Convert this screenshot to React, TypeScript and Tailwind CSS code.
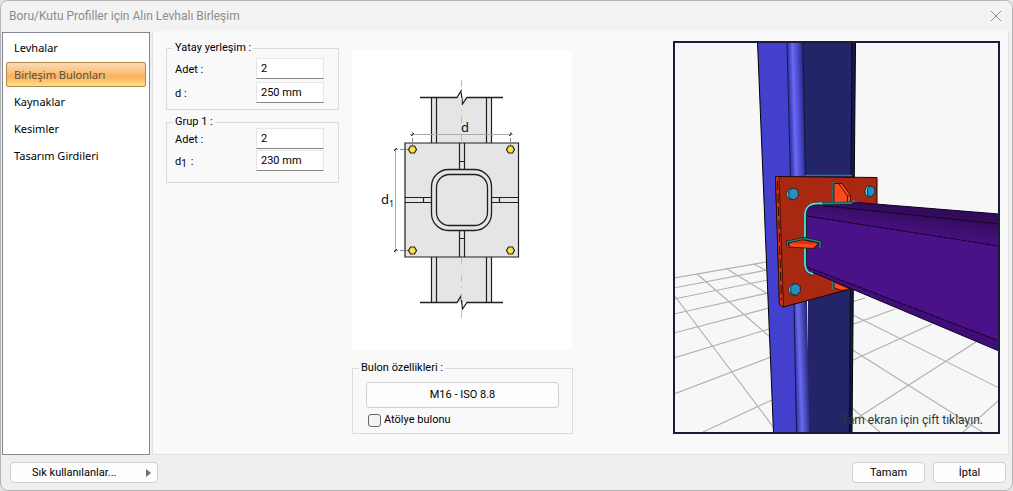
import { useState } from 'react'
import type { ReactNode } from 'react'
import { clsx } from 'clsx'

const pages = ['Levhalar', 'Birleşim Bulonları', 'Kaynaklar', 'Kesimler', 'Tasarım Girdileri']

const buttonStyle = 'rounded border border-[#d0d0d0] bg-[#fdfdfd] hover:bg-gray-100'

const Group = ({ title, className, children }: { title: string; className?: string; children: ReactNode }) => {
  return (
    <fieldset className="min-w-0 border border-[#dcdcdc]">
      <legend className="ml-1.5 px-0.5 leading-3">{title}</legend>
      <div className={className}>{children}</div>
    </fieldset>
  )
}

const Field = ({ id, label, value }: { id: string; label: ReactNode; value: string }) => {
  return (
    <div className="flex h-[21px] items-center justify-between pl-2 pr-3.5">
      <label htmlFor={id} className="pt-0.5">
        {label}
      </label>
      <input
        id={id}
        defaultValue={value}
        className="h-[21px] w-[68px] border border-[#e6e6e6] border-b-[#868686] bg-white px-1 outline-none"
      />
    </div>
  )
}

const Hexagon = ({ x, y }: { x: number; y: number }) => (
  <path transform={`translate(${x} ${y})`} d="M-4 0L-2-3.5H2L4 0L2 3.5H-2Z" fill="#ffe13c" stroke="#222" strokeWidth="1.2" />
)

// Front view of the end plate with bolt spacing dimensions
const PlateDiagram = () => {
  return (
    <svg viewBox="0 0 220 300" className="h-[300px] w-[220px] bg-white" fill="none" stroke="#1f1f1f">
      <path d="M79.5 47.5H139.5V252.5H79.5Z" fill="#e5e5e5" stroke="none" />
      <path d="M79.5 47.5V252.5M84.5 47.5V252.5M134.5 47.5V252.5M139.5 47.5V252.5" strokeWidth="1.2" />
      <path d="M68 47.5H105L109 41L110.5 54L115 47.5H151M68 252.5H105L109 246L110.5 259L115 252.5H151" strokeWidth="1.3" />
      <path d="M109.5 30V93M109.5 207V270" stroke="#bbb" strokeDasharray="7 5 1 5" />
      <path d="M53 93H166.5V207H53Z" fill="#e5e5e5" strokeWidth="1.2" />
      <path
        d="M107.5 93V119.5M112.5 93V119.5M107.5 111.5H112.5M107.5 180.5V207M112.5 180.5V207M107.5 188.5H112.5M53 147.5H79.5M53 152.5H79.5M71.5 147.5V152.5M139.5 147.5H166.5M139.5 152.5H166.5M147.5 147.5V152.5"
        strokeWidth="1.2"
      />
      <rect x="79.5" y="119.5" width="60" height="61" rx="17" fill="#e5e5e5" strokeWidth="1.3" />
      <rect x="84.5" y="124.5" width="51" height="51" rx="13" fill="#e5e5e5" strokeWidth="1.3" />
      <path d="M58 84.5H161M43.5 98V203" stroke="#aaa" />
      <path d="M60.5 82V96M158.5 82V96M42 99.5H57M42 200.5H57" stroke="#888" strokeDasharray="4 2" />
      <path d="M59 86L62 83M157 86L160 83M42 101L45 98M42 202L45 199" stroke="#333" />
      <Hexagon x={60.5} y={99.5} />
      <Hexagon x={158.5} y={99.5} />
      <Hexagon x={60.5} y={200.5} />
      <Hexagon x={158.5} y={200.5} />
      <g className="font-['Noto_Sans',sans-serif]" fill="#111" stroke="none" fontSize="13">
        <text x="109" y="82">d</text>
        <text x="29" y="154">d</text>
        <text x="37" y="157" fontSize="9">1</text>
      </g>
    </svg>
  )
}

const Bolt = ({ x, y, rx }: { x: number; y: number; rx: number }) => (
  <g stroke="#101820" strokeWidth="0.8">
    <ellipse cx={x - 1.5} cy={y} rx={rx} ry="5.5" fill="#4fe0ec" />
    <path
      transform={`translate(${x} ${y})`}
      d={rx > 4 ? 'M-4.5-3L0-6L5-4L5.5 2L1 6L-4 4Z' : 'M-3-3L0-5.5L4-4L4.5 2L1 5L-3 4Z'}
      fill="#2a8cc0"
    />
  </g>
)

// Perspective view of the joint: column, plate and beam over the floor grid
const ModelView = () => {
  return (
    <svg viewBox="675 43 323 389" preserveAspectRatio="xMidYMid slice" className="h-full w-full" fill="none">
      <defs>
        <linearGradient id="corner" gradientUnits="userSpaceOnUse" x1="787" y1="100" x2="804" y2="99.5">
          <stop offset="0" stopColor="#3030a0" />
          <stop offset=".18" stopColor="#3c3cc0" />
          <stop offset=".4" stopColor="#6a6af2" />
          <stop offset=".7" stopColor="#4a4ad0" />
          <stop offset="1" stopColor="#28287c" />
        </linearGradient>
        <linearGradient id="cornerLow" gradientUnits="userSpaceOnUse" x1="794.5" y1="370" x2="808.5" y2="369.5">
          <stop offset="0" stopColor="#3030a0" />
          <stop offset=".4" stopColor="#6a6af2" />
          <stop offset="1" stopColor="#28287c" />
        </linearGradient>
        <linearGradient id="beamTop" gradientUnits="userSpaceOnUse" x1="900" y1="207" x2="896" y2="236">
          <stop offset="0" stopColor="#2f0b55" />
          <stop offset=".35" stopColor="#3a0e69" />
          <stop offset="1" stopColor="#4b1188" />
        </linearGradient>
      </defs>
      <g stroke="#adb0ad" strokeWidth="1.1">
        <path d="M674 278L766 262M674 288L767 270M674 299L768 280M674 314L768 293M674 333L769 308M674 358L769 329M674 394L771 357M703 432L772 400" />
        <path d="M674 295L774 428M697 274L770 337M727 269L768 294M754 264L767 271" />
        <path d="M851 302L865 298M851 325L895 309M851 361L932 324M851 422L976 342M962 433L999 400" />
        <path d="M851 314L999 388M851 349L984 433M851 407L881 433" />
      </g>
      <path d="M757.5 42L787 42L797 433H773.5Z" fill="#4240cc" />
      <path d="M803 42H852L849.5 433H808V300H805Z" fill="#242468" />
      <path d="M787 42H803L805.5 180H790.5Z" fill="url(#corner)" />
      <path d="M793 300H807L809.5 433H796.5Z" fill="url(#cornerLow)" />
      <path d="M852 42H855.5L852 433H849.5Z" fill="#191950" />
      <path d="M757.5 42L773.5 433M855.5 42L852 433M852 42L849.5 433" stroke="#000" />
      <path d="M787 42L790.5 180M803 42L805.5 180M794 300L796.5 433" stroke="#15153f" />
      <path d="M805 175.5H852" stroke="#238080" strokeWidth="1.5" />

      <path d="M775.5 176.5L877 177.5V206L850 289L783.5 307L779.5 304.5Z" fill="#a92811" stroke="#1c0500" />
      <path d="M775.5 176.5H779L783.5 307L779.5 304.5Z" fill="#cf3518" stroke="#2a0800" strokeWidth=".8" />
      <path d="M777.5 181L781.5 300" stroke="#2a0800" strokeWidth="1" strokeDasharray="9 4" />
      <Bolt x={793} y={194} rx={5} />
      <Bolt x={870.5} y={191.5} rx={4} />
      <Bolt x={795} y={289.5} rx={5} />
      <path d="M834 204V185Q833 182 836 183" stroke="#0c2020" strokeWidth="3" />
      <path d="M833 203V184Q833 182 836 182" stroke="#238080" strokeWidth="1.6" />
      <path d="M834 183.5H842L850.5 195.5V203H834Z" fill="#ff4a1f" stroke="#2a0800" strokeWidth=".8" />
      <path d="M839 184L847.5 196V203M847.5 196L850.5 195.5" stroke="#2a0800" strokeWidth=".8" />
      <path d="M851 202L855 201" stroke="#238080" strokeWidth="2" />
      <path d="M833 281V289" stroke="#238080" strokeWidth="2" />
      <path d="M834 282L850 289L842 290.5L834 288Z" fill="#ff4a1f" stroke="#2a0800" strokeWidth=".8" />

      <path d="M807 216Q807 205 817 204L857 202.5L999 214V351L852 289L813 272Q807 271 807 264Z" fill="#4b1188" />
      <path d="M817 204L857 202.5L999 214V248L935 236L807 216Q808 206 817 204Z" fill="url(#beamTop)" />
      <path d="M840 203L857 202.5L999 214V224Z" fill="#320c5a" />
      <path d="M807 267L999 341V351L852 289L813 273Z" fill="#3f0e76" />
      <path d="M817 205L999 224M807 216L935 236L999 246M807 267L999 341" stroke="#12001f" strokeDasharray="5 1" />
      <path d="M857 202.5L999 214M813 272.5L852 289L999 351" stroke="#17062b" />
      <path d="M852 203L816 204Q805.5 205 805.5 215V265Q806 273 813 274.5" stroke="#0c2020" strokeWidth="3" />
      <path d="M852 203L820 203.5" stroke="#238080" strokeWidth="2" />
      <path d="M822 203.5Q805 202 805 215V265Q806 273 813 274" stroke="#52e2e6" strokeWidth="1.8" />

      <path d="M787.5 246V242L805 238.5L820 242V248" stroke="#0c2020" strokeWidth="3" />
      <path d="M787.5 246V242L805 238.5L820 242V248" stroke="#238080" strokeWidth="1.6" />
      <path d="M789 243L802 240L818 243L817 245L813 248.5L789 247Z" fill="#ff4a1f" stroke="#2a0800" strokeWidth=".8" />
      <path d="M790 243.2L802 240.5L817 243L813 244.5Z" fill="#d03616" />
    </svg>
  )
}

export default function App() {
  const [page, setPage] = useState(pages[1])

  return (
    <div className="h-screen bg-[#e4e4e4]">
      <div className="flex h-full flex-col overflow-hidden rounded-lg border border-[#b4b4b4] bg-[#efefef] font-['Roboto','Noto_Sans',sans-serif] text-[11px] leading-4 text-black">
        <header className="flex h-[30px] shrink-0 items-center justify-between bg-[#f3f3f3] pl-2 pr-2.5">
          <h1 className="text-xs text-[#8c8c8c]">Boru/Kutu Profiller için Alın Levhalı Birleşim</h1>
          <button type="button" aria-label="Kapat" className="text-[#8c8c8c]">
            <svg viewBox="0 0 12 12" className="size-3" stroke="currentColor">
              <path d="M1 1L11 11M11 1L1 11" />
            </svg>
          </button>
        </header>

        <div className="flex min-h-0 flex-1 pl-px pr-[3px]">
          <nav className="mt-px flex w-[148px] shrink-0 flex-col border border-[#828790] bg-white px-[3px] pt-px font-['Noto_Sans',sans-serif]">
            {pages.map((name) => (
              <button
                key={name}
                type="button"
                onClick={() => setPage(name)}
                className={clsx(
                  'my-px h-[25px] shrink-0 rounded-xs border pl-[7px] text-left',
                  name === page
                    ? 'border-[#b08a4c] bg-linear-to-b from-[#fbdcb4] via-[#f9b25a] via-60% to-[#fde08a] text-[#5a5040]'
                    : 'border-transparent',
                )}
              >
                {name}
              </button>
            ))}
          </nav>

          <main className="ml-0.5 flex flex-1 items-start border-b border-l border-r border-[#e2e2e2] bg-[#f9f9f9] pl-[13px] pr-2">
            <div className="mt-[11px] w-[173px] shrink-0">
              <Group title="Yatay yerleşim :" className="flex flex-col gap-[3px] pb-1.5 pt-1">
                <Field id="count" label="Adet :" value="2" />
                <Field id="spacing" label="d :" value="250 mm" />
              </Group>
              <div className="mt-1.5">
                <Group title="Grup 1 :" className="flex flex-col gap-px pb-[11px]">
                  <Field id="group-count" label="Adet :" value="2" />
                  <Field
                    id="group-spacing"
                    label={
                      <>
                        d<sub className="mr-1 text-[10px]">1</sub>:
                      </>
                    }
                    value="230 mm"
                  />
                </Group>
              </div>
            </div>

            <div className="ml-[13px] mt-[19px] w-[221px] shrink-0">
              <PlateDiagram />
              <div className="mt-3">
                <Group title="Bulon özellikleri :" className="px-[13px] pb-[5px] pt-2">
                  <button type="button" className={clsx(buttonStyle, 'h-[26px] w-full')}>
                    M16 - ISO 8.8
                  </button>
                  <label className="mt-1 flex items-center gap-[3px] pl-0.5">
                    <input
                      type="checkbox"
                      className="size-[13px] appearance-none rounded-[3px] border border-[#666] bg-[#f3f3f3] checked:bg-[#5a5a5a]"
                    />
                    Atölye bulonu
                  </label>
                </Group>
              </div>
            </div>

            <div className="relative ml-[100px] mt-2.5 h-[393px] min-w-0 flex-1 border-2 border-[#1c1c38] bg-[#f7f7f7]">
              <ModelView />
              <p className="absolute bottom-1 right-[15px] text-xs text-[#26383c]">Tam ekran için çift tıklayın.</p>
            </div>
          </main>
        </div>

        <footer className="flex h-[35px] shrink-0 items-center gap-2 pl-[9px] pr-1.5">
          <button type="button" className={clsx(buttonStyle, 'flex h-[21px] w-[148px] items-center pl-[21px] pr-1.5')}>
            <span className="flex-1 text-left">Sık kullanılanlar...</span>
            <svg viewBox="0 0 5 8" className="h-2 w-[5px]">
              <path d="M0 0L5 4L0 8Z" fill="#707070" />
            </svg>
          </button>
          <button type="button" className={clsx(buttonStyle, 'ml-auto h-[21px] w-[73px]')}>
            Tamam
          </button>
          <button type="button" className={clsx(buttonStyle, 'h-[21px] w-[73px]')}>
            İptal
          </button>
        </footer>
      </div>
    </div>
  )
}
